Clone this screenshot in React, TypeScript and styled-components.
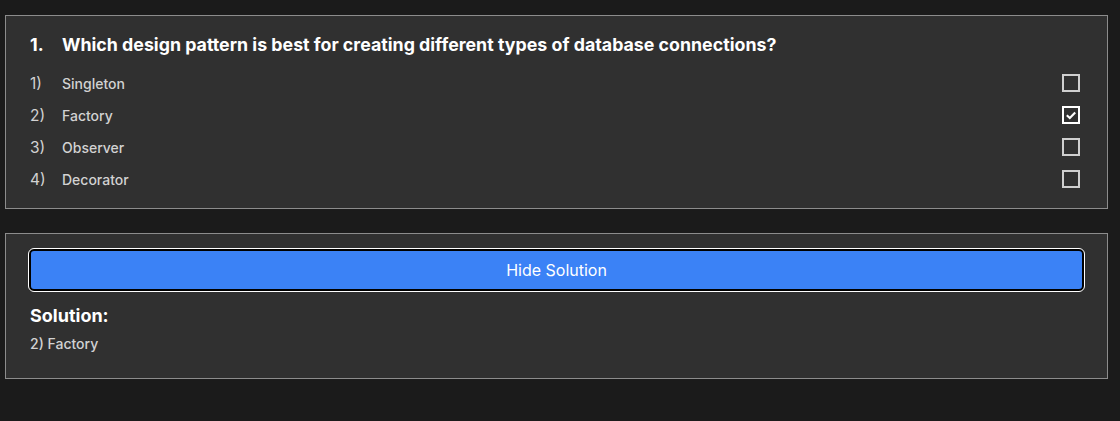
import styled, { createGlobalStyle } from "styled-components";

const GlobalStyle = createGlobalStyle`
  body {
    margin: 0;
    background: #1b1b1b;
    font-family: Inter, "Noto Sans", sans-serif;
    color: #ffffff;
  }
`;

const Page = styled.div`
  display: flex;
  flex-direction: column;
  gap: 24px;
  padding: 15px 12px 40px 5px;
`;

const Card = styled.div`
  background: #303030;
  border: 1px solid #8c8c8c;
  padding: 18px 27px 13px 24px;
`;

const Question = styled.h2`
  display: flex;
  margin: 0 0 11px;
  font-size: 17.8px;
  font-weight: 700;
  line-height: 22px;
`;

const QNum = styled.span`
  width: 32px;
`;

const Options = styled.ul`
  list-style: none;
  margin: 0;
  padding: 0;
`;

const Option = styled.li`
  display: flex;
  align-items: center;
  height: 32px;
  font-size: 14px;
  font-weight: 500;
  color: #d2d2d2;
`;

const OptNum = styled.span`
  width: 32px;
  font-size: 15.5px;
  font-weight: 400;
`;

const OptText = styled.span`
  flex: 1;
`;

const Box = styled.span<{ $checked?: boolean }>`
  width: 18px;
  height: 18px;
  box-sizing: border-box;
  border: 2px solid ${(p) => (p.$checked ? "#ffffff" : "#cfcfcf")};
  display: flex;
  align-items: center;
  justify-content: center;
`;

const ToggleButton = styled.button`
  display: block;
  width: 100%;
  height: 42px;
  background: #3b82f6;
  color: #ffffff;
  font-family: Inter, "Noto Sans", sans-serif;
  font-size: 16px;
  border: 2px solid #000000;
  border-radius: 5px;
  outline: 1px solid #ffffff;
  cursor: pointer;
`;

const SolutionCard = styled(Card)`
  padding: 15px 23px 26px 23px;
`;

const SolutionTitle = styled.h3`
  margin: 14px 0 8px 1px;
  font-size: 18px;
  font-weight: 700;
  line-height: 22px;
`;

const SolutionText = styled.p`
  margin: 0 0 0 1px;
  font-size: 14px;
  font-weight: 500;
  color: #d2d2d2;
`;

const options = ["Singleton", "Factory", "Observer", "Decorator"];

export default function App() {
  return (
    <>
      <GlobalStyle />
      <Page>
        <Card>
          <Question>
            <QNum>1.</QNum>
            <span>Which design pattern is best for creating different types of database connections?</span>
          </Question>
          <Options>
            {options.map((o, i) => (
              <Option key={o}>
                <OptNum>{i + 1})</OptNum>
                <OptText>{o}</OptText>
                <Box $checked={i === 1}>
                  {i === 1 && (
                    <svg width="12" height="12" viewBox="0 0 12 12">
                      <path d="M1.8 6.2 L4.8 9 L10.2 3.4" fill="none" stroke="#fff" strokeWidth="2.1" />
                    </svg>
                  )}
                </Box>
              </Option>
            ))}
          </Options>
        </Card>
        <SolutionCard>
          <ToggleButton>Hide Solution</ToggleButton>
          <SolutionTitle>Solution:</SolutionTitle>
          <SolutionText>2) Factory</SolutionText>
        </SolutionCard>
      </Page>
    </>
  );
}
